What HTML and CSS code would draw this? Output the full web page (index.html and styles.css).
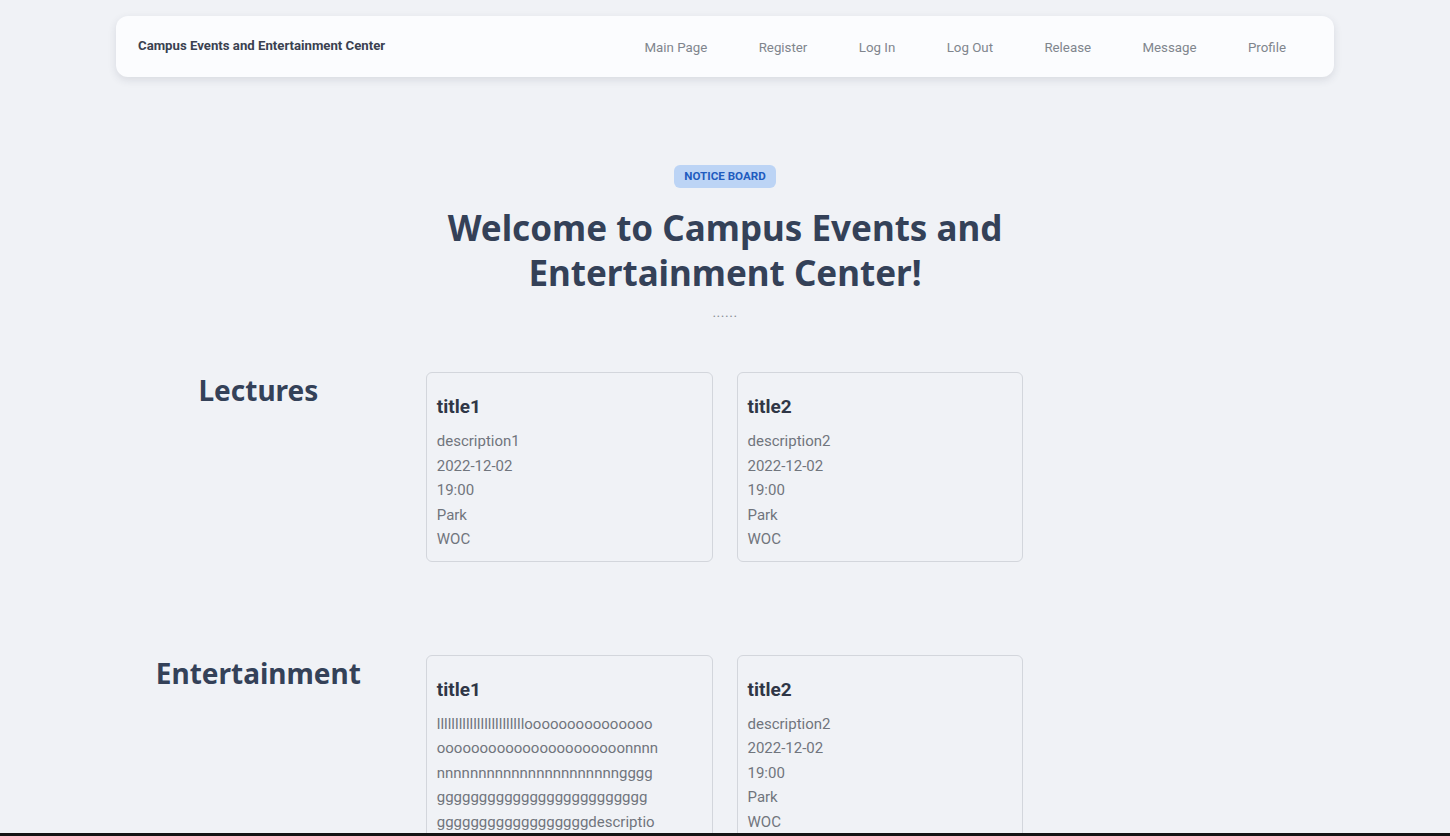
FILE: index.html
```html
<!DOCTYPE html>
<html lang="en">
<head>
<meta charset="utf-8">
<title>Campus Events and Entertainment Center</title>
<link rel="stylesheet" href="styles.css">
</head>
<body>
<div class="page">
  <header class="navbar">
    <div class="brand">Campus Events and Entertainment Center</div>
    <nav class="nav">
      <a href="#">Main Page</a>
      <a href="#">Register</a>
      <a href="#">Log In</a>
      <a href="#">Log Out</a>
      <a href="#">Release</a>
      <a href="#">Message</a>
      <a href="#">Profile</a>
    </nav>
  </header>

  <section class="hero">
    <span class="badge">NOTICE BOARD</span>
    <h1 class="hero-title">Welcome to Campus Events and<br>Entertainment Center!</h1>
    <p class="dots">......</p>
  </section>

  <section class="category">
    <h2 class="category-title">Lectures</h2>
    <div class="card">
      <h3 class="card-title">title1</h3>
      <p class="card-line">description1</p>
      <p class="card-line">2022-12-02</p>
      <p class="card-line">19:00</p>
      <p class="card-line">Park</p>
      <p class="card-line">WOC</p>
    </div>
    <div class="card">
      <h3 class="card-title">title2</h3>
      <p class="card-line">description2</p>
      <p class="card-line">2022-12-02</p>
      <p class="card-line">19:00</p>
      <p class="card-line">Park</p>
      <p class="card-line">WOC</p>
    </div>
  </section>

  <section class="category">
    <h2 class="category-title">Entertainment</h2>
    <div class="card">
      <h3 class="card-title">title1</h3>
      <p class="card-line card-wrap">llllllllllllllllllllllllooooooooooooooo<br>oooooooooooooooooooooonnnn<br>nnnnnnnnnnnnnnnnnnnnnngggg<br>ggggggggggggggggggggggggg<br>ggggggggggggggggggdescriptio<br>n1</p>
      <p class="card-line">2022-12-02</p>
      <p class="card-line">19:00</p>
      <p class="card-line">Park</p>
      <p class="card-line">WOC</p>
    </div>
    <div class="card">
      <h3 class="card-title">title2</h3>
      <p class="card-line">description2</p>
      <p class="card-line">2022-12-02</p>
      <p class="card-line">19:00</p>
      <p class="card-line">Park</p>
      <p class="card-line">WOC</p>
    </div>
  </section>
</div>
<div class="screen-edge"></div>
</body>
</html>
```
FILE: styles.css
```css
html, body {
  margin: 0;
  padding: 0;
}

body {
  background: #f0f2f6;
  font-family: Roboto, "Liberation Sans", sans-serif;
  color: #344158;
}

.page {
  width: 1218px;
  margin: 0 auto;
  padding-top: 16px;
  padding-bottom: 60px;
}

.navbar {
  height: 61px;
  background: #fbfcfe;
  border-radius: 12px;
  box-shadow: 0 3px 8px rgba(40, 50, 70, 0.12);
  display: flex;
  align-items: center;
  justify-content: space-between;
  padding: 0 48px 0 22px;
}

.brand {
  font-size: 13.2px;
  font-weight: 700;
  color: #3a4150;
  margin-top: -2px;
}

.nav {
  display: flex;
  gap: 51.4px;
  margin-top: 2px;
}

.nav a {
  font-size: 13.3px;
  color: #80858d;
  text-decoration: none;
}

.hero {
  display: flex;
  flex-direction: column;
  align-items: center;
  margin-top: 88px;
}

.badge {
  display: inline-block;
  height: 23px;
  line-height: 23px;
  padding: 0 10px;
  border-radius: 6px;
  background: #bcd4f5;
  color: #1f5cbf;
  font-size: 11.6px;
  font-weight: 700;
}

.hero-title {
  margin: 17px 0 0;
  font-family: "Noto Sans", "Open Sans", sans-serif;
  font-size: 35px;
  font-weight: 700;
  line-height: 45px;
  text-align: center;
  color: #344158;
}

.dots {
  margin: 9px 0 0;
  font-size: 14px;
  color: #8a8f97;
  letter-spacing: 0.5px;
}

.category {
  display: grid;
  grid-template-columns: repeat(4, 1fr);
  column-gap: 24px;
  margin-top: 52px;
  margin-left: -1px;
}

.category + .category {
  margin-top: 93px;
}

.category-title {
  margin: 0;
  font-family: "Noto Sans", "Open Sans", sans-serif;
  font-size: 28px;
  font-weight: 700;
  line-height: 36px;
  text-align: center;
  color: #344158;
}

.card {
  border: 1px solid #d3d6dc;
  border-radius: 6px;
  padding: 20px 10px 9px;
  min-width: 0;
}

.card-title {
  margin: 0 0 8px;
  font-size: 19px;
  font-weight: 700;
  line-height: 28px;
  color: #2f3646;
}

.card-line {
  margin: 0;
  font-size: 15px;
  line-height: 24.5px;
  color: #70757d;
}

.card-wrap {
  word-break: break-all;
}

.screen-edge {
  position: fixed;
  left: 0;
  right: 0;
  bottom: 0;
  height: 3px;
  background: #141414;
}
```
